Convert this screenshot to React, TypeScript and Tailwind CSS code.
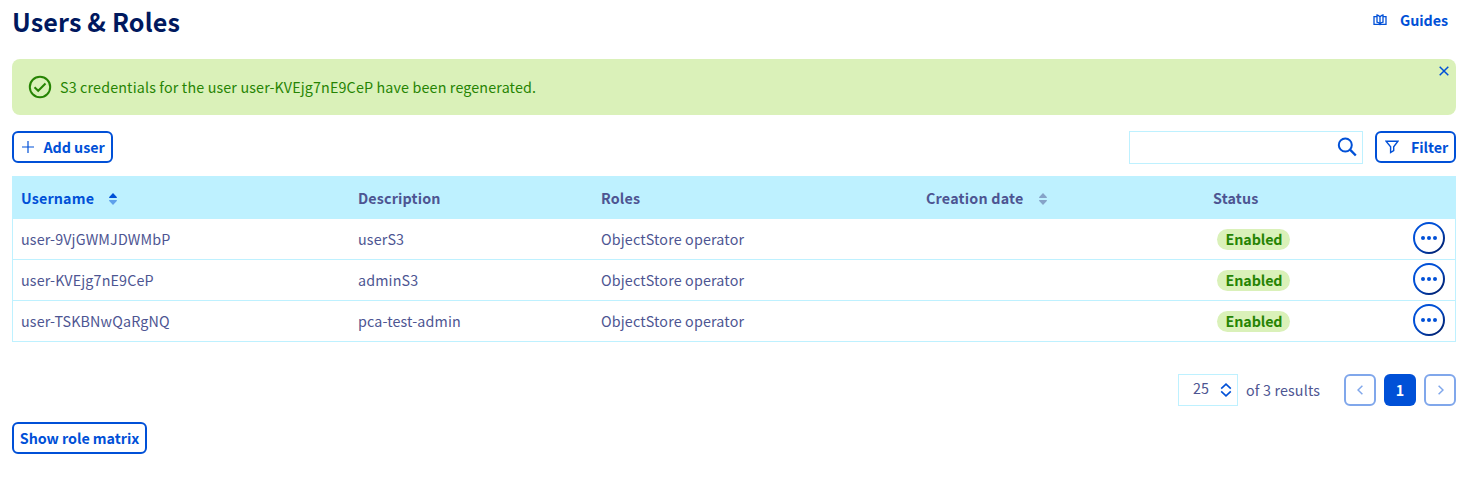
import React from "react";

const rows = [
  { name: "user-9VjGWMJDWMbP", description: "userS3", role: "ObjectStore operator" },
  { name: "user-KVEjg7nE9CeP", description: "adminS3", role: "ObjectStore operator" },
  { name: "user-TSKBNwQaRgNQ", description: "pca-test-admin", role: "ObjectStore operator" },
];

const columns = "grid grid-cols-[337px_243px_325px_287px_1fr]";

function Sort({ active }: { active?: boolean }) {
  return (
    <svg width="8" height="12" viewBox="0 0 8 12" className={active ? "mt-[2px] text-[#0050d7]" : "mt-[2px] text-[#4d5592]/50"}>
      <path d="M4 0 8 4.2 7.6 5H.4L0 4.2Z" fill="currentColor" />
      <path d="M4 12 8 7.8 7.6 7H.4L0 7.8Z" fill="currentColor" opacity={active ? 0.5 : 1} />
    </svg>
  );
}

function Actions() {
  return (
    <svg width="32" height="32" viewBox="0 0 32 32" className="mb-[2px]">
      <defs>
        <linearGradient id="ring" x1="0.2" y1="0.2" x2="0.8" y2="0.9">
          <stop offset="0.3" stopColor="#0050d7" />
          <stop offset="1" stopColor="#00257a" />
        </linearGradient>
      </defs>
      <circle cx="16" cy="16" r="15" fill="#fff" stroke="url(#ring)" strokeWidth="2" />
      <g fill="#0050d7">
        <circle cx="10" cy="16" r="2" />
        <circle cx="16" cy="16" r="2" />
        <circle cx="22" cy="16" r="2" />
      </g>
    </svg>
  );
}

export default function App() {
  return (
    <main className="h-[477px] overflow-hidden bg-white pr-[19px] pl-3 font-['Noto_Sans_CJK_SC',sans-serif] text-[14.3px] leading-6 tracking-[0.15px] text-[#4d5592]">
      <header className="flex h-[59px] items-start justify-between">
        <h1 className="pt-[5px] text-[25.1px] leading-8 font-bold text-[#00185e]">Users &amp; Roles</h1>
        <a className="flex items-center gap-[13px] pt-2 pr-2 font-bold tracking-[-0.05px] text-[#0050d7]">
          <svg width="14" height="12" viewBox="0 0 14 12" fill="none" stroke="currentColor" strokeWidth="1.3">
            <path d="M4 2.7H1v7.6h12V2.7h-3" />
            <path d="M7 2.8v7.5M7 2.8Q5.8 1.2 4 1v7.2Q6 8.5 7 10.3 8 8.5 10 8.2V1Q8.2 1.2 7 2.8" />
          </svg>
          <span>Guides</span>
        </a>
      </header>

      <section className="flex h-14 items-start justify-between rounded-lg bg-[#daf1b9] text-[#268403]">
        <div className="flex h-full items-center gap-2 pl-4">
          <svg width="24" height="24" viewBox="0 0 24 24" fill="none" stroke="currentColor" strokeWidth="2">
            <circle cx="12" cy="12" r="10.2" />
            <path d="m6.5 12.3 3.7 3.5 7.3-7.3" />
          </svg>
          <p>S3 credentials for the user user-KVEjg7nE9CeP have been regenerated.</p>
        </div>
        <svg width="10" height="10" viewBox="0 0 10 10" fill="none" stroke="#0050d7" strokeWidth="1.5" className="mt-[7px] mr-[7px]">
          <path d="m.7.7 8.6 8.6M9.3.7.7 9.3" />
        </svg>
      </section>

      <div className="mt-4 flex h-[33px] items-start justify-between tracking-[-0.05px] text-[#0050d7]">
        <button className="flex h-8 w-[101px] items-center gap-[9.5px] rounded-md border-2 border-[#0050d7] pl-2 font-bold whitespace-nowrap">
          <svg width="12" height="12" viewBox="0 0 12 12" fill="none" stroke="currentColor" strokeWidth="1.2">
            <path d="M6 0v12M0 6h12" />
          </svg>
          <span>Add user</span>
        </button>
        <div className="flex items-start gap-3">
          <div className="flex h-[33px] w-[234px] items-center justify-end border border-[#bef1ff] pr-[5px]">
            <svg width="20" height="20" viewBox="0 0 20 20" fill="none" stroke="currentColor" strokeWidth="2" className="-mt-px">
              <circle cx="8.3" cy="8" r="6.5" />
              <path d="m13 12.7 5.8 5.8" strokeWidth="2.4" />
            </svg>
          </div>
          <button className="flex h-8 w-[81px] items-center gap-3 rounded-md border-2 border-[#0050d7] pl-2 font-bold">
            <svg width="14" height="14" viewBox="0 0 14 14" fill="none" stroke="currentColor" strokeWidth="1.4">
              <path d="M1 1.2h12L8.7 6.7v4L5.6 12.6V6.7Z" />
            </svg>
            <span>Filter</span>
          </button>
        </div>
      </div>

      <section className="mt-3 border-x border-[#bef1ff]">
        <div className={`${columns} h-[43px] items-center bg-[#bef1ff] pt-px pl-2 font-bold tracking-[0.15px]`}>
          <div className="flex items-center gap-[15px] text-[#0050d7]"><span>Username</span><Sort active /></div>
          <div>Description</div>
          <div>Roles</div>
          <div className="flex items-center gap-[15px] tracking-[0.2px]"><span>Creation date</span><Sort /></div>
          <div>Status</div>
        </div>
        {rows.map((row) => (
          <div key={row.name} className={`${columns} h-[41px] items-center border-b border-[#bef1ff] pl-2`}>
            <div>{row.name}</div>
            <div>{row.description}</div>
            <div>{row.role}</div>
            <div />
            <div className="flex items-center justify-between pr-[10px] pl-1">
              <span className="flex h-[21px] w-[73px] items-center justify-center rounded-full bg-[#daf1b9] pl-px font-bold tracking-[-0.1px] text-[#268403]">Enabled</span>
              <Actions />
            </div>
          </div>
        ))}
      </section>

      <nav className="mt-8 flex h-8 items-center justify-end">
        <div className="flex h-8 w-[60px] items-center justify-between border border-[#bef1ff] pr-[5px] pl-[14px]">
          <span className="-mt-1">25</span>
          <svg width="12" height="14" viewBox="0 0 12 14" fill="none" stroke="#0050d7" strokeWidth="1.6">
            <path d="M1.2 5.7 6 1.2l4.8 4.5M1.2 8.3 6 12.8l4.8-4.5" />
          </svg>
        </div>
        <span className="ml-2 w-[98px]">of 3 results</span>
        <div className="flex gap-2">
          <button className="flex size-8 items-center justify-center rounded-md border-2 border-[#80a7eb] text-[#80a7eb]">
            <svg width="6" height="10" viewBox="0 0 6 10" fill="none" stroke="currentColor" strokeWidth="1.5" className="mr-px"><path d="M5.4.7 1 5l4.4 4.3" /></svg>
          </button>
          <button className="flex size-8 items-center justify-center rounded-md bg-[#0050d7] font-bold text-white">1</button>
          <button className="flex size-8 items-center justify-center rounded-md border-2 border-[#80a7eb] text-[#80a7eb]">
            <svg width="6" height="10" viewBox="0 0 6 10" fill="none" stroke="currentColor" strokeWidth="1.5" className="ml-px"><path d="M.6.7 5 5 .6 9.3" /></svg>
          </button>
        </div>
      </nav>

      <button className="mt-4 flex h-8 w-[135px] items-center justify-center rounded-md border-2 border-[#0050d7] font-bold tracking-[-0.05px] whitespace-nowrap text-[#0050d7]">
        Show role matrix
      </button>
    </main>
  );
}
